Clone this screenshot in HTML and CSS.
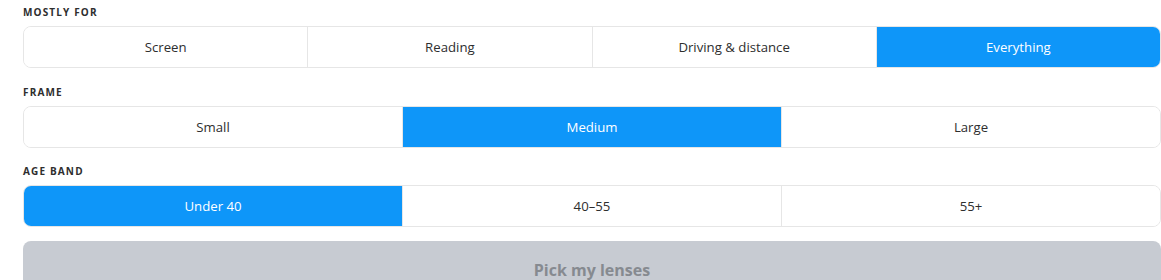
FILE: index.html
```html
<!DOCTYPE html>
<html lang="en">
<head>
<meta charset="utf-8">
<title>Lens picker</title>
<link rel="stylesheet" href="styles.css">
</head>
<body>
<div class="form">
  <div class="field">
    <div class="label">Mostly for</div>
    <div class="seg">
      <button class="opt">Screen</button>
      <button class="opt">Reading</button>
      <button class="opt">Driving &amp; distance</button>
      <button class="opt on">Everything</button>
    </div>
  </div>
  <div class="field">
    <div class="label">Frame</div>
    <div class="seg">
      <button class="opt">Small</button>
      <button class="opt on">Medium</button>
      <button class="opt">Large</button>
    </div>
  </div>
  <div class="field">
    <div class="label">Age band</div>
    <div class="seg">
      <button class="opt on">Under 40</button>
      <button class="opt">40–55</button>
      <button class="opt">55+</button>
    </div>
  </div>
  <button class="submit" disabled>Pick my lenses</button>
</div>
</body>
</html>
```

FILE: styles.css
```css
* { box-sizing: border-box; }
html, body {
  margin: 0;
  padding: 0;
  background: #fff;
  font-family: "Open Sans", "Liberation Sans", sans-serif;
  color: #333;
  overflow: hidden;
}
.form {
  padding: 5px 0 0 23px;
  width: 1161px;
}
.field {
  margin-bottom: 16.5px;
}
.field:last-of-type {
  margin-bottom: 14px;
}
.label {
  font-size: 10px;
  line-height: 14px;
  font-weight: 700;
  letter-spacing: 1.15px;
  text-transform: uppercase;
  color: #2e2e2e;
  margin-bottom: 7px;
}
.seg {
  display: flex;
  height: 42px;
  border: 1.5px solid #e6e6e6;
  border-radius: 8px;
  overflow: hidden;
  background: #fff;
}
.opt {
  flex: 1 1 0;
  border: 0;
  border-left: 1.5px solid #e6e6e6;
  background: #fff;
  font-family: inherit;
  font-size: 13.2px;
  color: #2e2e2e;
  padding: 0;
  margin: 0;
}
.opt:first-child { border-left: 0; }
.opt.on {
  background: #0e96f9;
  color: #fff;
}
.submit {
  display: block;
  width: 100%;
  height: 58px;
  border: 0;
  border-radius: 8px;
  background: #c7cbd2;
  color: #868a90;
  font-family: inherit;
  font-size: 16px;
  font-weight: 700;
  padding: 0;
}
```
